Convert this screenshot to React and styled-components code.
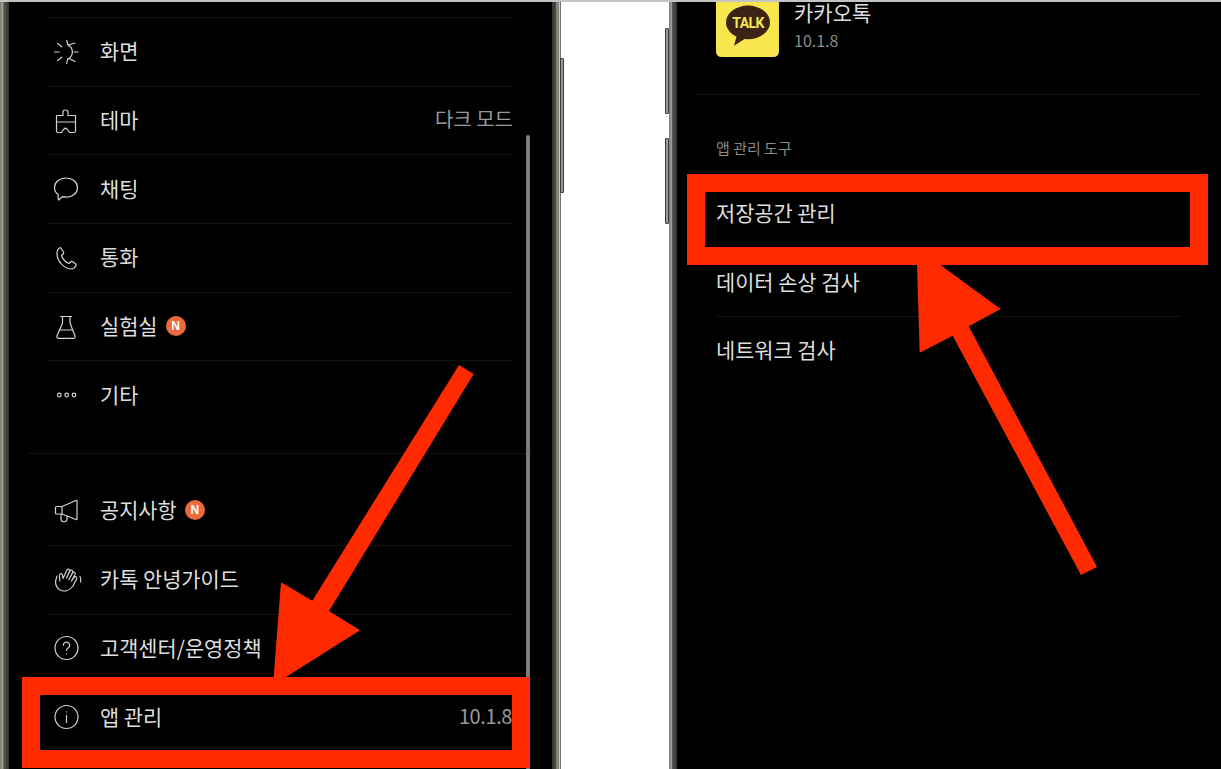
import React from "react";
import styled, { createGlobalStyle } from "styled-components";

const RED = "#ff2a00";

const GlobalStyle = createGlobalStyle`
  html, body {
    margin: 0;
    padding: 0;
    background: #fff;
  }
  * {
    box-sizing: border-box;
  }
`;

const Page = styled.div`
  position: relative;
  width: 1221px;
  height: 769px;
  overflow: hidden;
  display: flex;
  flex-direction: column;
  background: #fff;
  border-top: 2px solid #c4c4c4;
  font-family: "Noto Sans CJK KR", "Noto Sans", sans-serif;
`;

const Shots = styled.div`
  flex: 1;
  min-height: 0;
  display: grid;
  grid-template-columns: 561px 1fr;
  column-gap: 108px;
`;

const Phone = styled.div`
  position: relative;
  display: flex;
  min-width: 0;
`;

const Bezel = styled.div`
  flex: 0 0 ${(props) => props.$width}px;
  background: ${(props) =>
    props.$side === "left"
      ? "linear-gradient(90deg, #77776f 0, #a5a59d 30%, #55554f 42%, #33332f 100%)"
      : "linear-gradient(90deg, #33332f 0, #4c4c47 45%, #85857d 50%, #85857d 80%, #e8e8e8 85%, #2a2a2a 100%)"};
`;

const Screen = styled.div`
  position: relative;
  flex: 1;
  min-width: 0;
  background: #000;
  overflow: hidden;
  color: #dedede;
`;

const SideButton = styled.div`
  position: absolute;
  top: ${(props) => props.$top}px;
  height: ${(props) => props.$height}px;
  width: 4px;
  left: ${(props) => props.$left}px;
  background: #9a9a9a;
  border: 1px solid #3a3a3a;
  border-radius: 1px;
`;

const MenuList = styled.div`
  margin: ${(props) => props.$top || 0}px 40px 0 39px;
`;

const Row = styled.div`
  display: flex;
  align-items: center;
  height: 68.7px;
  padding-left: ${(props) => (props.$plain ? 0 : 6)}px;
  border-top: 1px solid ${(props) => (props.$first ? "transparent" : "#131313")};
`;

const IconSlot = styled.span`
  flex: 0 0 24px;
  width: 24px;
  height: 24px;
  margin-right: 22px;
  display: flex;

  svg {
    overflow: visible;
    fill: none;
    stroke: #d2d2d2;
    stroke-width: 1.2;
    stroke-linecap: round;
    stroke-linejoin: round;
  }
`;

const Label = styled.span`
  margin-top: -3px;
  font-size: 20.85px;
  line-height: 28px;
  white-space: nowrap;
`;

const Value = styled.span`
  margin: -3px ${(props) => (props.$numeric ? "0" : "-1px")} 0 auto;
  font-size: 20px;
  line-height: 28px;
  color: #9a9a9a;
  white-space: nowrap;
  letter-spacing: ${(props) => (props.$numeric ? "-0.4px" : "0")};
`;

const NewBadge = styled.span`
  margin-left: 8px;
  margin-top: -1px;
  width: 20px;
  height: 20px;
  border-radius: 50%;
  background: #ec6a3c;
  color: #fff;
  font-family: "Liberation Sans", sans-serif;
  font-weight: 700;
  font-size: 12px;
  display: flex;
  align-items: center;
  justify-content: center;
`;

const SectionRule = styled.div`
  height: 1px;
  margin: ${(props) => props.$top}px ${(props) => props.$right}px ${(props) => props.$bottom}px
    ${(props) => props.$left}px;
  background: #131313;
`;

const Scrollbar = styled.div`
  position: absolute;
  top: 133px;
  bottom: 0;
  left: 517px;
  width: 3.5px;
  border-radius: 2px 2px 0 0;
  background: #7c7c7c;
`;

const AppHeader = styled.div`
  display: flex;
  gap: 15px;
  height: 55px;
  margin-left: 39px;
`;

const AppInfo = styled.div`
  display: flex;
  flex-direction: column;
`;

const AppName = styled.div`
  margin-top: -1px;
  font-size: 21px;
  line-height: 22px;
`;

const AppVersion = styled.div`
  margin-top: 5px;
  font-size: 16px;
  line-height: 24px;
  color: #8c8c8c;
`;

const ToolsTitle = styled.div`
  margin: 43px 0 0 39px;
  font-size: 15px;
  line-height: 20px;
  color: #8a8a8a;
`;

const RedFrame = styled.div`
  position: absolute;
  left: ${(props) => props.$left}px;
  top: ${(props) => props.$top}px;
  width: ${(props) => props.$width}px;
  height: ${(props) => props.$height}px;
  border: 18.5px solid ${RED};
`;

const ArrowLayer = styled.svg`
  position: absolute;
  left: 0;
  top: -2px;
  width: 1221px;
  height: 769px;
  pointer-events: none;
  fill: ${RED};
`;

const SunIcon = () => (
  <svg width="24" height="24" viewBox="0 0 24 24">
    <path d="M.5 12H5M3.800 3.500l3.800 3.300M3.800 20.500l3.800-3.300M14 5a7.800 7.800 0 0 1 0 14" />
    <path d="M12.700.5 14 5l7-2M20 12h4M15 18.500l6 3M12.700 23.500l1-4.700" />
  </svg>
);

const BrushIcon = () => (
  <svg width="24" height="24" viewBox="0 0 24 24">
    <path d="M2.500 6.500H9V3q0-2 2.500-2T14 3v3.500h7.500v15.500q0 1.500-1.500 1.500h-4.500L13 20q-1.500-1.500-3 0l-2.500 3.500H4q-1.500 0-1.500-1.500Z" />
    <path d="M2.500 13h19" />
  </svg>
);

const ChatIcon = () => (
  <svg width="24" height="24" viewBox="0 0 24 24">
    <path d="M12 1c6.500 0 11.500 4.200 11.500 9.700S18.500 20.200 12 20.200c-1.300 0-2.500-.2-3.700-.5L5 22.800c-.4.300-.8 0-.8-.4V17.500C1.800 15.700.5 13.400.5 10.700.5 5.200 5.500 1 12 1Z" />
  </svg>
);

const PhoneIcon = () => (
  <svg width="24" height="24" viewBox="0 0 24 24">
    <path d="M6.500 1.500 9.500 6q.5 1-.5 2L7.500 9.500Q8.500 13 11 15q2 2 4 2.500l1.500-1.500q1-1 2.300-.3l2.700 2q1 1.100.2 2.300-1.700 3-4.700 3-6-.5-10-5.500Q3 13 3 7q0-4 3.500-5.500Z" />
  </svg>
);

const FlaskIcon = () => (
  <svg width="24" height="24" viewBox="0 0 24 24">
    <path d="M6.700 1.500h11M8.500 1.500V8L3 21q-.5 2.300 1.500 2.300h15q2 0 1.500-2.300L16 8V1.500M5.300 15h13.400" />
  </svg>
);

const DotsIcon = () => (
  <svg width="24" height="24" viewBox="0 0 24 24">
    <circle cx="5.300" cy="12" r="1.800" />
    <circle cx="12.700" cy="12" r="1.800" />
    <circle cx="20" cy="12" r="1.800" />
  </svg>
);

const MegaphoneIcon = () => (
  <svg width="24" height="24" viewBox="0 0 24 24">
    <path d="M2.500 7.500H8L22 1.500q1-.3 1 .8v17.500q0 1-1 .7L8 15H2.500q-1 0-1-1V8.500q0-1 1-1ZM8 7.500V15M7 15v4.500a3 3 0 0 0 6 .5v-2.800" />
  </svg>
);

const HandIcon = () => (
  <svg width="24" height="24" viewBox="0 0 24 24">
    <path d="M3 8C1 13 1 19 6 22c5 2.500 10 0 13-4l3.500-7c1-2-1.500-3.500-2.500-1.500L17.500 13l3.500-6.500c1-2-1.500-3.300-2.500-1.500L15 11.500l3.500-7c1-2-1.500-3.500-2.500-1.500l-3.500 7 3-6.500c1-2-1.500-3.300-2.500-1.500L9 10.500l-.5-3.500C8 5 5.500 5 5.500 7.500L5.800 13" />
    <path d="M26 8.500q1.500 2.500.5 5.500" />
  </svg>
);

const HelpIcon = () => (
  <svg width="24" height="24" viewBox="0 0 24 24">
    <circle cx="12.500" cy="12" r="11.500" />
    <path d="M9.300 9.300a3.200 3.200 0 1 1 4.800 2.800c-1 .6-1.600 1.200-1.600 2.400M12.500 17.500v.1" />
  </svg>
);

const InfoIcon = () => (
  <svg width="24" height="24" viewBox="0 0 24 24">
    <circle cx="12.500" cy="12" r="11.500" />
    <path d="M12.500 10.500v7M12.500 6.800v.1" />
  </svg>
);

const TalkLogo = () => (
  <svg width="63" height="55" viewBox="0 0 63 55">
    <path d="M0 0h63v49q0 6-6 6H6q-6 0-6-6Z" fill="#f9e54e" />
    <ellipse cx="32" cy="20.400" rx="22" ry="16.800" fill="#3b2316" />
    <path d="M21 33l-3 10.700 11-7Z" fill="#3b2316" />
    <text
      x="32"
      y="26.300"
      textAnchor="middle"
      fontFamily="Roboto, sans-serif"
      fontWeight="700"
      fontSize="14"
      letterSpacing="-0.600"
      fill="#f9e54e"
    >
      TALK
    </text>
  </svg>
);

const topMenu = [
  { icon: <SunIcon />, label: "화면" },
  { icon: <BrushIcon />, label: "테마", value: "다크 모드" },
  { icon: <ChatIcon />, label: "채팅" },
  { icon: <PhoneIcon />, label: "통화" },
  { icon: <FlaskIcon />, label: "실험실", isNew: true },
  { icon: <DotsIcon />, label: "기타" },
];

const bottomMenu = [
  { icon: <MegaphoneIcon />, label: "공지사항", isNew: true },
  { icon: <HandIcon />, label: "카톡 안녕가이드" },
  { icon: <HelpIcon />, label: "고객센터/운영정책" },
  { icon: <InfoIcon />, label: "앱 관리", value: "10.1.8", numeric: true },
];

const tools = ["저장공간 관리", "데이터 손상 검사", "네트워크 검사"];

function MenuRows({ items, firstHidden }) {
  return items.map((item, i) => (
    <Row key={item.label} $first={firstHidden && i === 0}>
      <IconSlot>{item.icon}</IconSlot>
      <Label>{item.label}</Label>
      {item.isNew && <NewBadge>N</NewBadge>}
      {item.value && <Value $numeric={item.numeric}>{item.value}</Value>}
    </Row>
  ));
}

function App() {
  return (
    <>
      <GlobalStyle />
      <Page>
        <Shots>
          <Phone>
            <Bezel $side="left" $width={9} />
            <Screen>
              <MenuList $top={15}>
                <MenuRows items={topMenu} />
              </MenuList>
              <SectionRule $top={24} $bottom={22} $left={19} $right={20} />
              <MenuList>
                <MenuRows items={bottomMenu} firstHidden />
              </MenuList>
              <Scrollbar />
            </Screen>
            <Bezel $side="right" $width={9} />
            <SideButton $left={560} $top={56} $height={135} />
          </Phone>
          <Phone>
            <SideButton $left={-4} $top={26} $height={86} />
            <SideButton $left={-4} $top={136} $height={86} />
            <Bezel $side="left" $width={8} />
            <Screen>
              <AppHeader>
                <TalkLogo />
                <AppInfo>
                  <AppName>카카오톡</AppName>
                  <AppVersion>10.1.8</AppVersion>
                </AppInfo>
              </AppHeader>
              <SectionRule $top={37} $bottom={0} $left={19} $right={21} />
              <ToolsTitle>앱 관리 도구</ToolsTitle>
              <MenuList $top={20.6}>
                {tools.map((tool, i) => (
                  <Row key={tool} $plain $first={i === 0}>
                    <Label>{tool}</Label>
                  </Row>
                ))}
              </MenuList>
            </Screen>
          </Phone>
        </Shots>
        <RedFrame $left={21.5} $top={675} $width={508.5} $height={90.5} />
        <RedFrame $left={687} $top={171.5} $width={521} $height={91} />
        <ArrowLayer viewBox="0 0 1221 769">
          <polygon points="459,365 473.700,374 329,611 360,630.300 286,677 272.700,690 281,582.300 312.300,600.700" />
          <polygon points="1081,575 1097,567 968.700,326.300 1000.700,309 939,264 917,264 919.700,352.700 952.700,335.700" />
        </ArrowLayer>
      </Page>
    </>
  );
}

export default App;
